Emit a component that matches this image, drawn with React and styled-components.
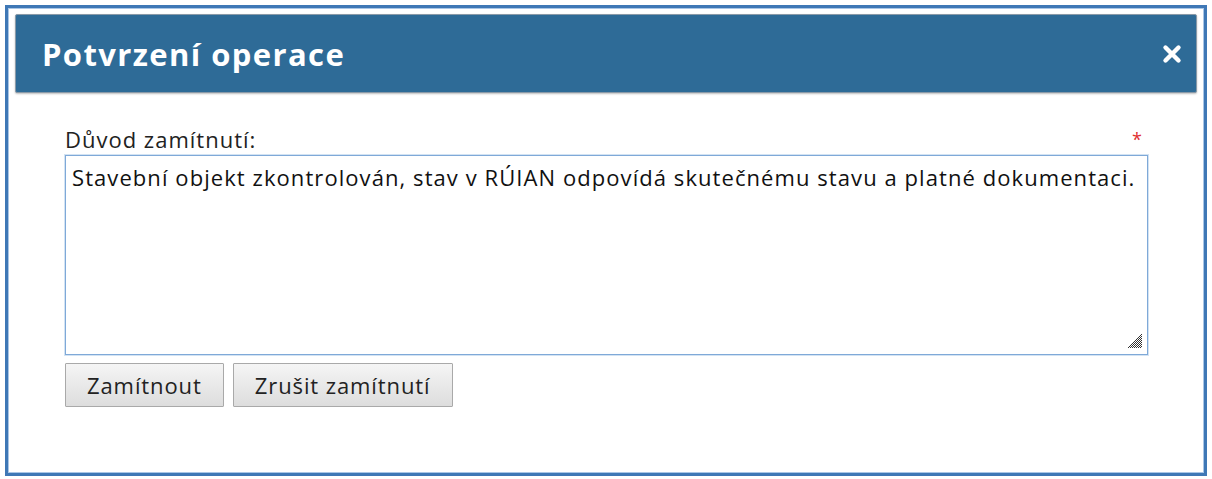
import React, { useState } from "react";
import styled, { createGlobalStyle } from "styled-components";

const GlobalStyle = createGlobalStyle`
  html, body {
    margin: 0;
    padding: 0;
    background: #ffffff;
  }
  body {
    font-family: "Open Sans", "Noto Sans", sans-serif;
  }
`;

const Frame = styled.div`
  margin: 5px;
  width: 1202px;
  height: 471px;
  box-sizing: border-box;
  border: 3px solid #3f78b6;
  box-shadow: inset 0 0 0 1px #a9c6e6;
  background: #ffffff;
  padding: 6px 7px;
`;

const Header = styled.div`
  display: flex;
  align-items: center;
  justify-content: space-between;
  height: 79px;
  box-sizing: border-box;
  padding: 0 13px 0 26px;
  background: #2e6b97;
  border: 1px solid #8a9aa8;
  border-radius: 2px;
  box-shadow: 0 1px 2px rgba(0, 0, 0, 0.25);
`;

const Title = styled.h1`
  margin: 0;
  color: #ffffff;
  font-size: 31px;
  font-weight: 700;
  letter-spacing: 1.4px;
`;

const CloseButton = styled.button`
  display: flex;
  align-items: center;
  justify-content: center;
  width: 22px;
  height: 22px;
  padding: 0;
  border: none;
  background: transparent;
  cursor: pointer;
`;

const Body = styled.div`
  padding: 32px 49px 0 50px;
`;

const LabelRow = styled.div`
  display: flex;
  justify-content: space-between;
  align-items: flex-start;
  color: #222222;
  font-size: 22px;
  line-height: 28px;
  letter-spacing: 1px;
`;

const Required = styled.span`
  color: #e03030;
  font-size: 18px;
  margin-right: 5px;
`;

const Field = styled.div`
  position: relative;
  margin-top: 2px;
`;

const TextArea = styled.textarea`
  display: block;
  width: 100%;
  height: 200px;
  box-sizing: border-box;
  border: 1px solid #7fa9d8;
  box-shadow: 0 0 0 1px #d3e3f3;
  padding: 7px 6px;
  font-family: "Open Sans", "Noto Sans", sans-serif;
  font-size: 22px;
  line-height: 28px;
  letter-spacing: 1.07px;
  color: #111111;
  resize: none;
  outline: none;
`;

const Grip = styled.svg`
  position: absolute;
  right: 6px;
  bottom: 7px;
  pointer-events: none;
`;

const Actions = styled.div`
  display: flex;
  gap: 9px;
  margin-top: 8px;
`;

const Button = styled.button`
  height: 44px;
  padding: 0 ${(p) => p.$px}px;
  border: 1px solid #a9a9a9;
  border-radius: 1px;
  background: linear-gradient(#f5f5f5, #dddddd);
  color: #222222;
  font-family: "Open Sans", "Noto Sans", sans-serif;
  font-size: 22px;
  letter-spacing: 0.9px;
  cursor: pointer;
`;

function ResizeGrip() {
  const dots = [];
  for (let y = 0; y < 14; y++) {
    for (let x = 0; x < 14; x++) {
      if (x + y >= 13 && (x + y) % 2 === 1) {
        dots.push(<rect key={`${x}-${y}`} x={x} y={y} width="1" height="1" />);
      }
    }
  }
  return (
    <Grip width="14" height="14" viewBox="0 0 14 14" fill="#333333">
      {dots}
    </Grip>
  );
}

export default function App() {
  const [reason, setReason] = useState(
    "Stavební objekt zkontrolován, stav v RÚIAN odpovídá skutečnému stavu a platné dokumentaci."
  );

  return (
    <>
      <GlobalStyle />
      <Frame>
        <Header>
          <Title>Potvrzení operace</Title>
          <CloseButton aria-label="Zavřít">
            <svg width="20" height="20" viewBox="0 0 20 20">
              <path
                d="M3.5 3.5 L16.5 16.5 M16.5 3.5 L3.5 16.5"
                stroke="#ffffff"
                strokeWidth="4.4"
                strokeLinecap="round"
              />
            </svg>
          </CloseButton>
        </Header>
        <Body>
          <LabelRow>
            <span>Důvod zamítnutí:</span>
            <Required>*</Required>
          </LabelRow>
          <Field>
            <TextArea value={reason} onChange={(e) => setReason(e.target.value)} />
            <ResizeGrip />
          </Field>
          <Actions>
            <Button $px={21}>Zamítnout</Button>
            <Button $px={21}>Zrušit zamítnutí</Button>
          </Actions>
        </Body>
      </Frame>
    </>
  );
}
